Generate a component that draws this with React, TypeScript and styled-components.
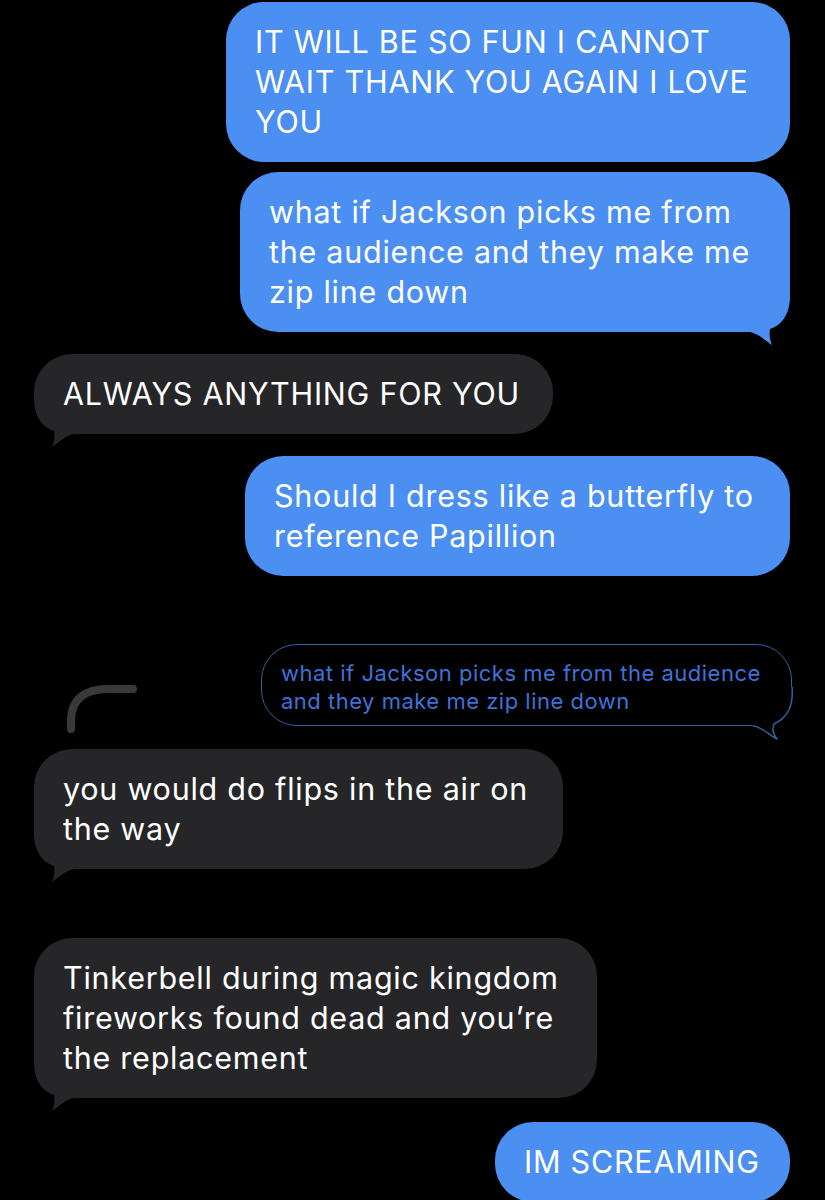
import React from "react";
import styled, { createGlobalStyle } from "styled-components";

const GlobalStyle = createGlobalStyle`
  html, body {
    margin: 0;
    padding: 0;
    background: #000;
  }
  body {
    overflow: hidden;
    font-family: Inter, "Noto Sans", "Liberation Sans", sans-serif;
  }
`;

const BLUE = "#4b8ff3";
const GRAY = "#262628";
const QUOTE_LINE = "#33609f";
const QUOTE_TEXT = "#3f72d8";

const Thread = styled.div`
  display: flex;
  flex-direction: column;
  padding: 2px 35px 0 34px;
  height: 1200px;
  box-sizing: border-box;
`;

const Row = styled.div<{ $side: "left" | "right"; $space: number }>`
  display: flex;
  justify-content: ${(p) => (p.$side === "right" ? "flex-end" : "flex-start")};
  margin-top: ${(p) => p.$space}px;
`;

const Bubble = styled.div<{ $side: "left" | "right"; $w: number }>`
  position: relative;
  box-sizing: border-box;
  width: ${(p) => p.$w}px;
  padding: 20px 0 20px 29px;
  border-radius: 38px;
  background: ${(p) => (p.$side === "right" ? BLUE : GRAY)};
  color: #fff;
  font-size: 30.5px;
  line-height: 40px;
  letter-spacing: 0.75px;
`;

const Lines = styled.div`
  position: relative;
  z-index: 1;
`;

const Line = styled.span`
  display: block;
  white-space: nowrap;
`;

const TailSvg = styled.svg<{ $side: "left" | "right" }>`
  position: absolute;
  bottom: -16px;
  z-index: 0;
  ${(p) =>
    p.$side === "right"
      ? "right: -4px;"
      : "left: -4px; transform: scaleX(-1);"}
`;

const TAIL_D =
  "M -46 -46 L 0 -46 L 0 -36 C 0 -16 -10 -6 -20 -3 C -21 3 -20 8 -18 13 C -24 9 -31 2 -40 0 L -46 0 Z";

const Tail = ({ side }: { side: "left" | "right" }) => (
  <TailSvg $side={side} viewBox="-46 -46 50 62" width={50} height={62}>
    <path d={TAIL_D} fill={side === "right" ? BLUE : GRAY} />
  </TailSvg>
);

const ReplyRow = styled.div<{ $space: number }>`
  display: flex;
  justify-content: space-between;
  align-items: flex-end;
  margin-top: ${(p) => p.$space}px;
  margin-right: -2px;
`;

const Connector = styled.svg`
  display: block;
  margin-left: 28px;
  margin-bottom: -11px;
  flex: none;
`;

const Quote = styled.div`
  position: relative;
  box-sizing: border-box;
  width: 531px;
  border: 1.5px solid ${QUOTE_LINE};
  border-radius: 36px;
  padding: 13.5px 0 10.5px 19px;
  color: ${QUOTE_TEXT};
  font-size: 22px;
  line-height: 28px;
  letter-spacing: 0.5px;
`;

const QuoteTailSvg = styled.svg`
  position: absolute;
  right: -5.5px;
  bottom: -17.5px;
`;

const QuoteTail = () => (
  <QuoteTailSvg viewBox="-46 -46 50 62" width={50} height={62}>
    <path
      d="M -40 -40 L -0.75 -40 L -0.75 -34 C -0.75 -16 -10 -7 -19 -3 C -21 2 -20 7 -16 12 C -22 9 -30 1 -38 -0.75 L -40 -0.75 Z"
      fill="#000"
    />
    <path
      d="M -0.75 -40 L -0.75 -34 C -0.75 -16 -10 -7 -19 -3 C -21 2 -20 7 -16 12 C -22 9 -30 1 -38 -0.75 L -40 -0.75"
      fill="none"
      stroke={QUOTE_LINE}
      strokeWidth={1.5}
      strokeLinejoin="round"
    />
  </QuoteTailSvg>
);

type Msg = {
  side: "left" | "right";
  w: number;
  space: number;
  tail: boolean;
  lines: string[];
};

const before: Msg[] = [
  {
    side: "right",
    w: 564,
    space: 0,
    tail: false,
    lines: ["IT WILL BE SO FUN I CANNOT", "WAIT THANK YOU AGAIN I LOVE", "YOU"],
  },
  {
    side: "right",
    w: 550,
    space: 10,
    tail: true,
    lines: ["what if Jackson picks me from", "the audience and they make me", "zip line down"],
  },
  { side: "left", w: 519, space: 22, tail: true, lines: ["ALWAYS ANYTHING FOR YOU"] },
  {
    side: "right",
    w: 545,
    space: 22,
    tail: false,
    lines: ["Should I dress like a butterfly to", "reference Papillion"],
  },
];

const after: Msg[] = [
  {
    side: "left",
    w: 529,
    space: 23,
    tail: true,
    lines: ["you would do flips in the air on", "the way"],
  },
  {
    side: "left",
    w: 563,
    space: 69,
    tail: true,
    lines: ["Tinkerbell during magic kingdom", "fireworks found dead and you\u2019re", "the replacement"],
  },
  { side: "right", w: 295, space: 24, tail: false, lines: ["IM SCREAMING"] },
];

const Message = ({ m }: { m: Msg }) => (
  <Row $side={m.side} $space={m.space}>
    <Bubble $side={m.side} $w={m.w}>
      {m.tail && <Tail side={m.side} />}
      <Lines>
        {m.lines.map((l, i) => (
          <Line key={i}>{l}</Line>
        ))}
      </Lines>
    </Bubble>
  </Row>
);

export default function App() {
  return (
    <>
      <GlobalStyle />
      <Thread>
        {before.map((m, i) => (
          <Message key={`b${i}`} m={m} />
        ))}
        <ReplyRow $space={68}>
          <Connector width={80} height={56} viewBox="0 0 80 56">
            <path
              d="M 9 48 L 9 40 C 9 17 24 8 46 8 L 71 8"
              fill="none"
              stroke="#39393b"
              strokeWidth={8}
              strokeLinecap="round"
            />
          </Connector>
          <Quote>
            <QuoteTail />
            <Lines>
              <Line>what if Jackson picks me from the audience</Line>
              <Line>and they make me zip line down</Line>
            </Lines>
          </Quote>
        </ReplyRow>
        {after.map((m, i) => (
          <Message key={`a${i}`} m={m} />
        ))}
      </Thread>
    </>
  );
}
